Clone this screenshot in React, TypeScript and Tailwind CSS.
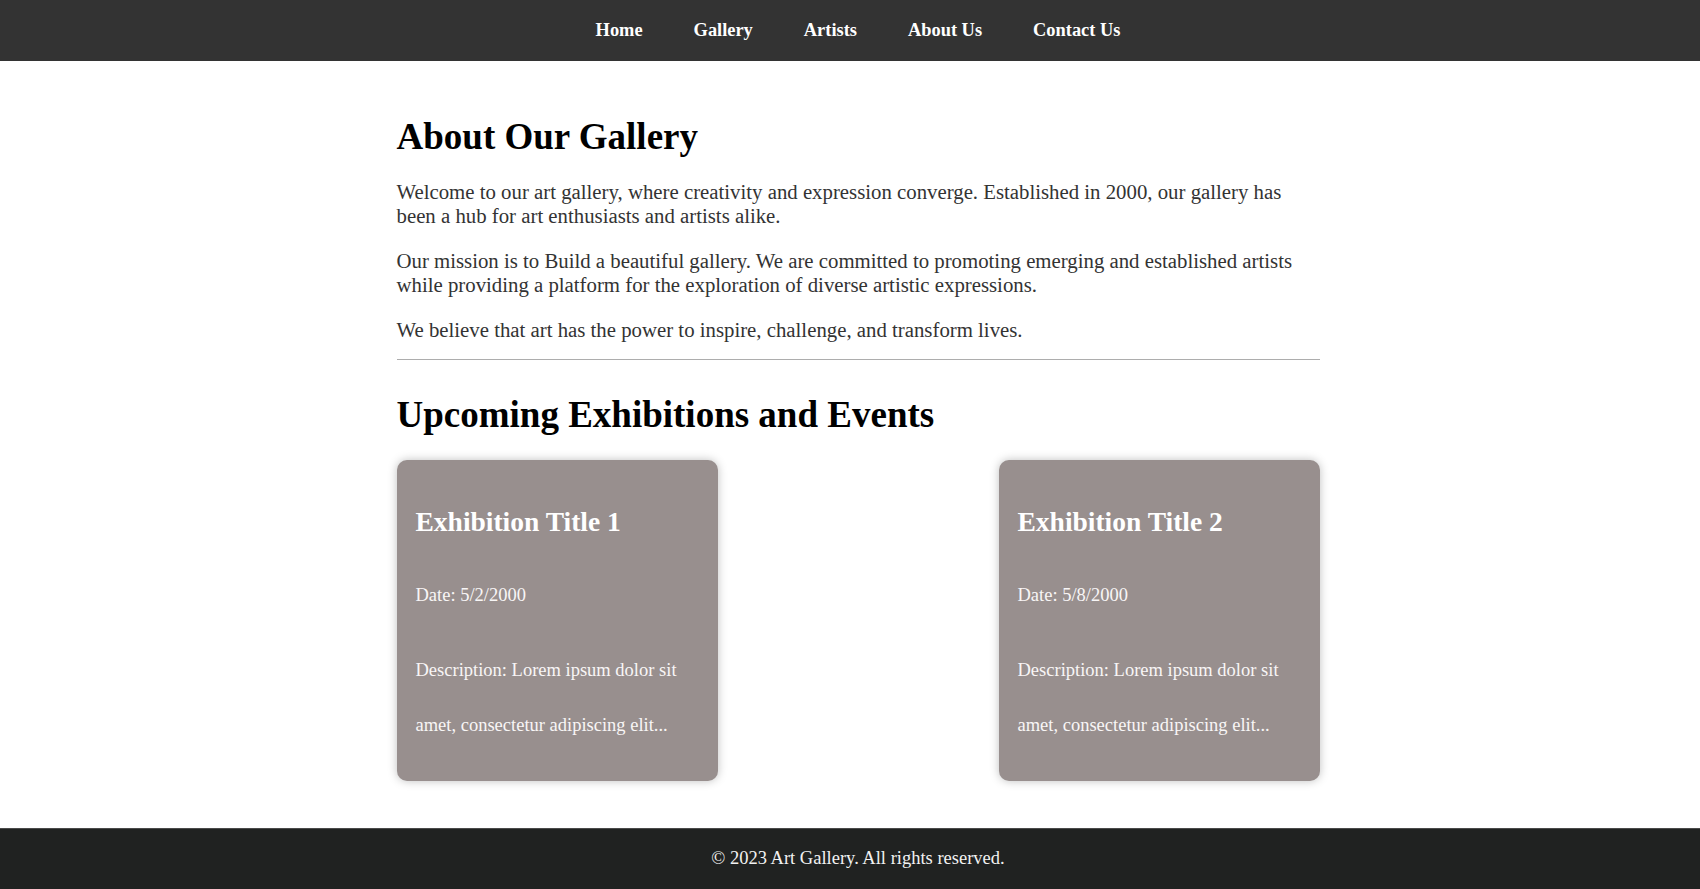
const links = ['Home', 'Gallery', 'Artists', 'About Us', 'Contact Us'];

const exhibitions = [
  { title: 'Exhibition Title 1', date: '5/2/2000' },
  { title: 'Exhibition Title 2', date: '5/8/2000' },
];

function ExhibitionCard({ title, date }: { title: string; date: string }) {
  return (
    <div className="w-[321px] h-[321px] bg-[#988f8e] rounded-[10px] shadow-[0_0_10px_rgba(0,0,0,0.25)] px-[19px] pt-[20px] text-[#f8f6f6]">
      <h3 className="text-[27.5px] font-bold leading-[84px] text-white">{title}</h3>
      <p className="mt-[4px] text-[18.5px] leading-[55px]">Date: {date}</p>
      <p className="mt-[20px] text-[18.5px] leading-[55px]">
        Description: Lorem ipsum dolor sit amet, consectetur adipiscing elit...
      </p>
    </div>
  );
}

export default function App() {
  return (
    <div className="min-h-screen flex flex-col bg-white font-['Liberation_Serif','Times_New_Roman',serif]">
      {/* Top navigation */}
      <nav className="h-[61px] bg-[#333333] flex items-center justify-center pl-4">
        <ul className="flex gap-[51px]">
          {links.map((link) => (
            <li key={link}>
              <a href="#" className="text-[18.4px] font-bold text-white">
                {link}
              </a>
            </li>
          ))}
        </ul>
      </nav>

      <main className="flex-1 pl-4">
        <div className="w-[923px] mx-auto pt-[55px] pb-[47px]">
          {/* About section */}
          <h2 className="text-[37px] font-bold leading-[42px] text-black">About Our Gallery</h2>
          <div className="mt-[22px] flex flex-col gap-[21px] text-[20.8px] leading-[24px] text-[#333333]">
            <p>
              Welcome to our art gallery, where creativity and expression converge. Established in 2000, our gallery
              has been a hub for art enthusiasts and artists alike.
            </p>
            <p>
              Our mission is to Build a beautiful gallery. We are committed to promoting emerging and established
              artists while providing a platform for the exploration of diverse artistic expressions.
            </p>
            <p>We believe that art has the power to inspire, challenge, and transform lives.</p>
          </div>
          <hr className="mt-[17px] border-0 border-t border-[#adadad]" />

          {/* Exhibitions */}
          <h2 className="mt-[34px] text-[37px] font-bold leading-[42px] text-black">
            Upcoming Exhibitions and Events
          </h2>
          <div className="mt-[24px] flex justify-between">
            {exhibitions.map((ex) => (
              <ExhibitionCard key={ex.title} title={ex.title} date={ex.date} />
            ))}
          </div>
        </div>
      </main>

      <footer className="h-[61px] bg-[#202221] border-t border-[#4a4a4a] flex items-center justify-center pl-4">
        <p className="text-[18.5px] text-[#f2f2f2]">© 2023 Art Gallery. All rights reserved.</p>
      </footer>
    </div>
  );
}
